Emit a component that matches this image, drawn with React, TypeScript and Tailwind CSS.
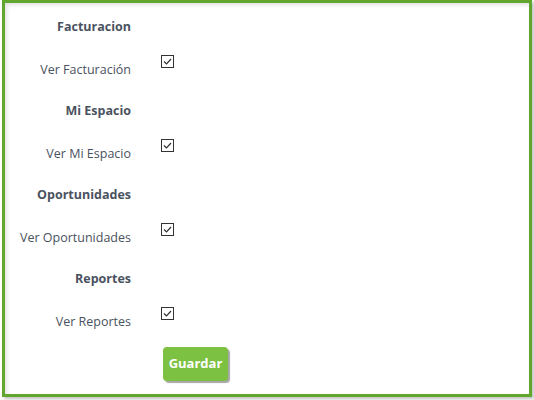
import React from 'react';

const sections = [
  { title: 'Facturacion', item: 'Ver Facturación' },
  { title: 'Mi Espacio', item: 'Ver Mi Espacio' },
  { title: 'Oportunidades', item: 'Ver Oportunidades' },
  { title: 'Reportes', item: 'Ver Reportes' },
];

function CheckBox() {
  return (
    <div className="w-[13px] h-[13px] border border-[#333] bg-white flex items-center justify-center">
      <svg width="11" height="11" viewBox="0 0 11 11" fill="none">
        <path d="M2 5.5 L4.5 8 L9 3" stroke="#333" strokeWidth="1.2" />
      </svg>
    </div>
  );
}

export default function App() {
  return (
    <div className="w-[534px] h-[400px] bg-white" style={{ fontFamily: '"Open Sans", sans-serif' }}>
      <div className="ml-[2px] w-[530px] h-[397px] border-[3px] border-[#62a62f] shadow-[2px_2px_3px_rgba(0,0,0,0.25),inset_2px_2px_4px_rgba(0,0,0,0.12)] bg-white">
        <div className="pt-[14px]">
          {sections.map((s, i) => (
            <div key={s.title} className={i > 0 ? 'mt-[21px]' : ''}>
              <div className="w-[126px] text-right text-[12.5px] leading-[20px] font-bold text-[#4a5260]">
                {s.title}
              </div>
              <div className="mt-[23px] flex items-start h-[20px]">
                <div className="w-[126px] text-right text-[12.5px] leading-[20px] text-[#4a5260]">
                  {s.item}
                </div>
                <div className="ml-[30px] -mt-[5px]">
                  <CheckBox />
                </div>
              </div>
            </div>
          ))}
          <div className="mt-[15px] ml-[158px]">
            <button className="w-[65px] h-[34px] rounded-[4px] bg-[#7dc142] text-white font-bold text-[13px] shadow-[2px_2px_1px_rgba(0,0,0,0.35)]">
              Guardar
            </button>
          </div>
        </div>
      </div>
    </div>
  );
}
